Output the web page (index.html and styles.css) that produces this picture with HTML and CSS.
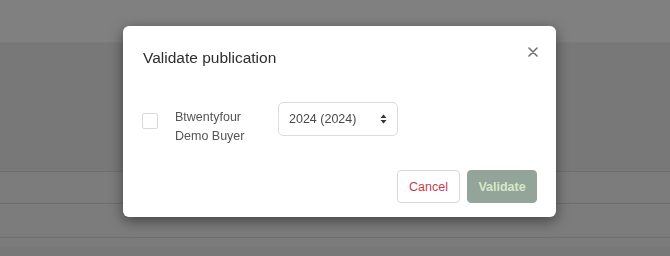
FILE: index.html
```html
<!DOCTYPE html>
<html>
<head>
<meta charset="utf-8">
<link rel="stylesheet" href="styles.css">
</head>
<body>
<div class="page">
  <div class="bg-top"></div>
  <div class="bg-panel"></div>
  <div class="bg-row"></div>
  <div class="bg-row tall"></div>
  <div class="bg-row short"></div>
  <div class="bg-bottom"></div>
</div>
<div class="overlay">
  <div class="modal">
    <div class="modal-header">
      <h4 class="modal-title">Validate publication</h4>
      <button class="close" type="button" aria-label="Close">
        <svg width="10" height="10" viewBox="0 0 10 10"><path d="M1 1 L9 9 M9 1 L1 9" stroke="#707070" stroke-width="1.6" stroke-linecap="round" fill="none"/></svg>
      </button>
    </div>
    <div class="modal-body">
      <span class="checkbox"></span>
      <div class="buyer">Btwentyfour<br>Demo Buyer</div>
      <div class="select">
        <span class="select-text">2024 (2024)</span>
        <svg class="caret" width="7" height="10" viewBox="0 0 7 10"><path d="M3.5 0.5 L6.5 4 L0.5 4 Z M0.5 6 L6.5 6 L3.5 9.5 Z" fill="#333"/></svg>
      </div>
    </div>
    <div class="modal-footer">
      <button class="btn btn-cancel" type="button">Cancel</button>
      <button class="btn btn-validate" type="button">Validate</button>
    </div>
  </div>
</div>
</body>
</html>
```

FILE: styles.css
```css
html, body {
  margin: 0;
  padding: 0;
}
body {
  width: 670px;
  height: 256px;
  overflow: hidden;
  background: #7f7f7f;
  font-family: "Liberation Sans", Arial, sans-serif;
}
.page {
  display: flex;
  flex-direction: column;
}
.bg-top {
  height: 42px;
  background: #808080;
  border-bottom: 1px solid #7b7b7b;
}
.bg-panel {
  height: 128px;
  background: #787878;
}
.bg-row {
  height: 30px;
  border-top: 1px solid #6f6f6f;
  border-bottom: 1px solid #7a7a7a;
  background: #7c7c7c;
}
.bg-row.tall {
  height: 32px;
}
.bg-row.short {
  height: 8px;
  background: #7b7b7b;
}
.bg-bottom {
  height: 20px;
  background: #787878;
}
.overlay {
  position: fixed;
  inset: 0;
}
.modal {
  margin: 26px 0 0 123px;
  width: 433px;
  height: 191px;
  box-sizing: border-box;
  background: #fff;
  border-radius: 6px;
  box-shadow: 0 4px 14px rgba(0, 0, 0, 0.45);
  display: flex;
  flex-direction: column;
}
.modal-header {
  display: flex;
  justify-content: space-between;
  align-items: flex-start;
  padding: 20px 18px 0 20px;
  height: 40px;
  box-sizing: border-box;
}
.modal-title {
  margin: 0;
  font-size: 15.5px;
  font-weight: normal;
  line-height: 24px;
  color: #2e2e2e;
}
.close {
  border: 0;
  background: none;
  padding: 0;
  margin-top: 1px;
  width: 10px;
  height: 10px;
  display: block;
}
.close svg {
  display: block;
}
.modal-body {
  display: flex;
  align-items: flex-start;
  padding: 36px 0 0 19px;
  height: 70px;
  box-sizing: border-box;
}
.checkbox {
  width: 14px;
  height: 14px;
  border: 1px solid #d9d9d9;
  border-radius: 2px;
  margin-top: 11px;
}
.buyer {
  margin-left: 17px;
  width: 103px;
  font-size: 12.5px;
  line-height: 19px;
  color: #555;
  padding-top: 6px;
}
.select {
  width: 120px;
  height: 34px;
  box-sizing: border-box;
  border: 1px solid #dcdcdc;
  border-radius: 5px;
  display: flex;
  align-items: center;
  justify-content: space-between;
  padding: 0 10px 0 10px;
}
.select-text {
  font-size: 12.5px;
  color: #4a4a4a;
}
.caret {
  display: block;
}
.modal-footer {
  display: flex;
  justify-content: flex-end;
  gap: 7px;
  padding: 34px 19px 0 0;
}
.btn {
  height: 33px;
  border-radius: 4px;
  font-family: "Liberation Sans", Arial, sans-serif;
  font-size: 12.5px;
  padding: 0;
  box-sizing: border-box;
}
.btn-cancel {
  width: 63px;
  background: #fff;
  border: 1px solid #d8d8d8;
  color: #cc3a4e;
}
.btn-validate {
  width: 70px;
  background: #93a49a;
  border: 1px solid #93a49a;
  color: #d7e8c8;
  font-weight: bold;
}
```
